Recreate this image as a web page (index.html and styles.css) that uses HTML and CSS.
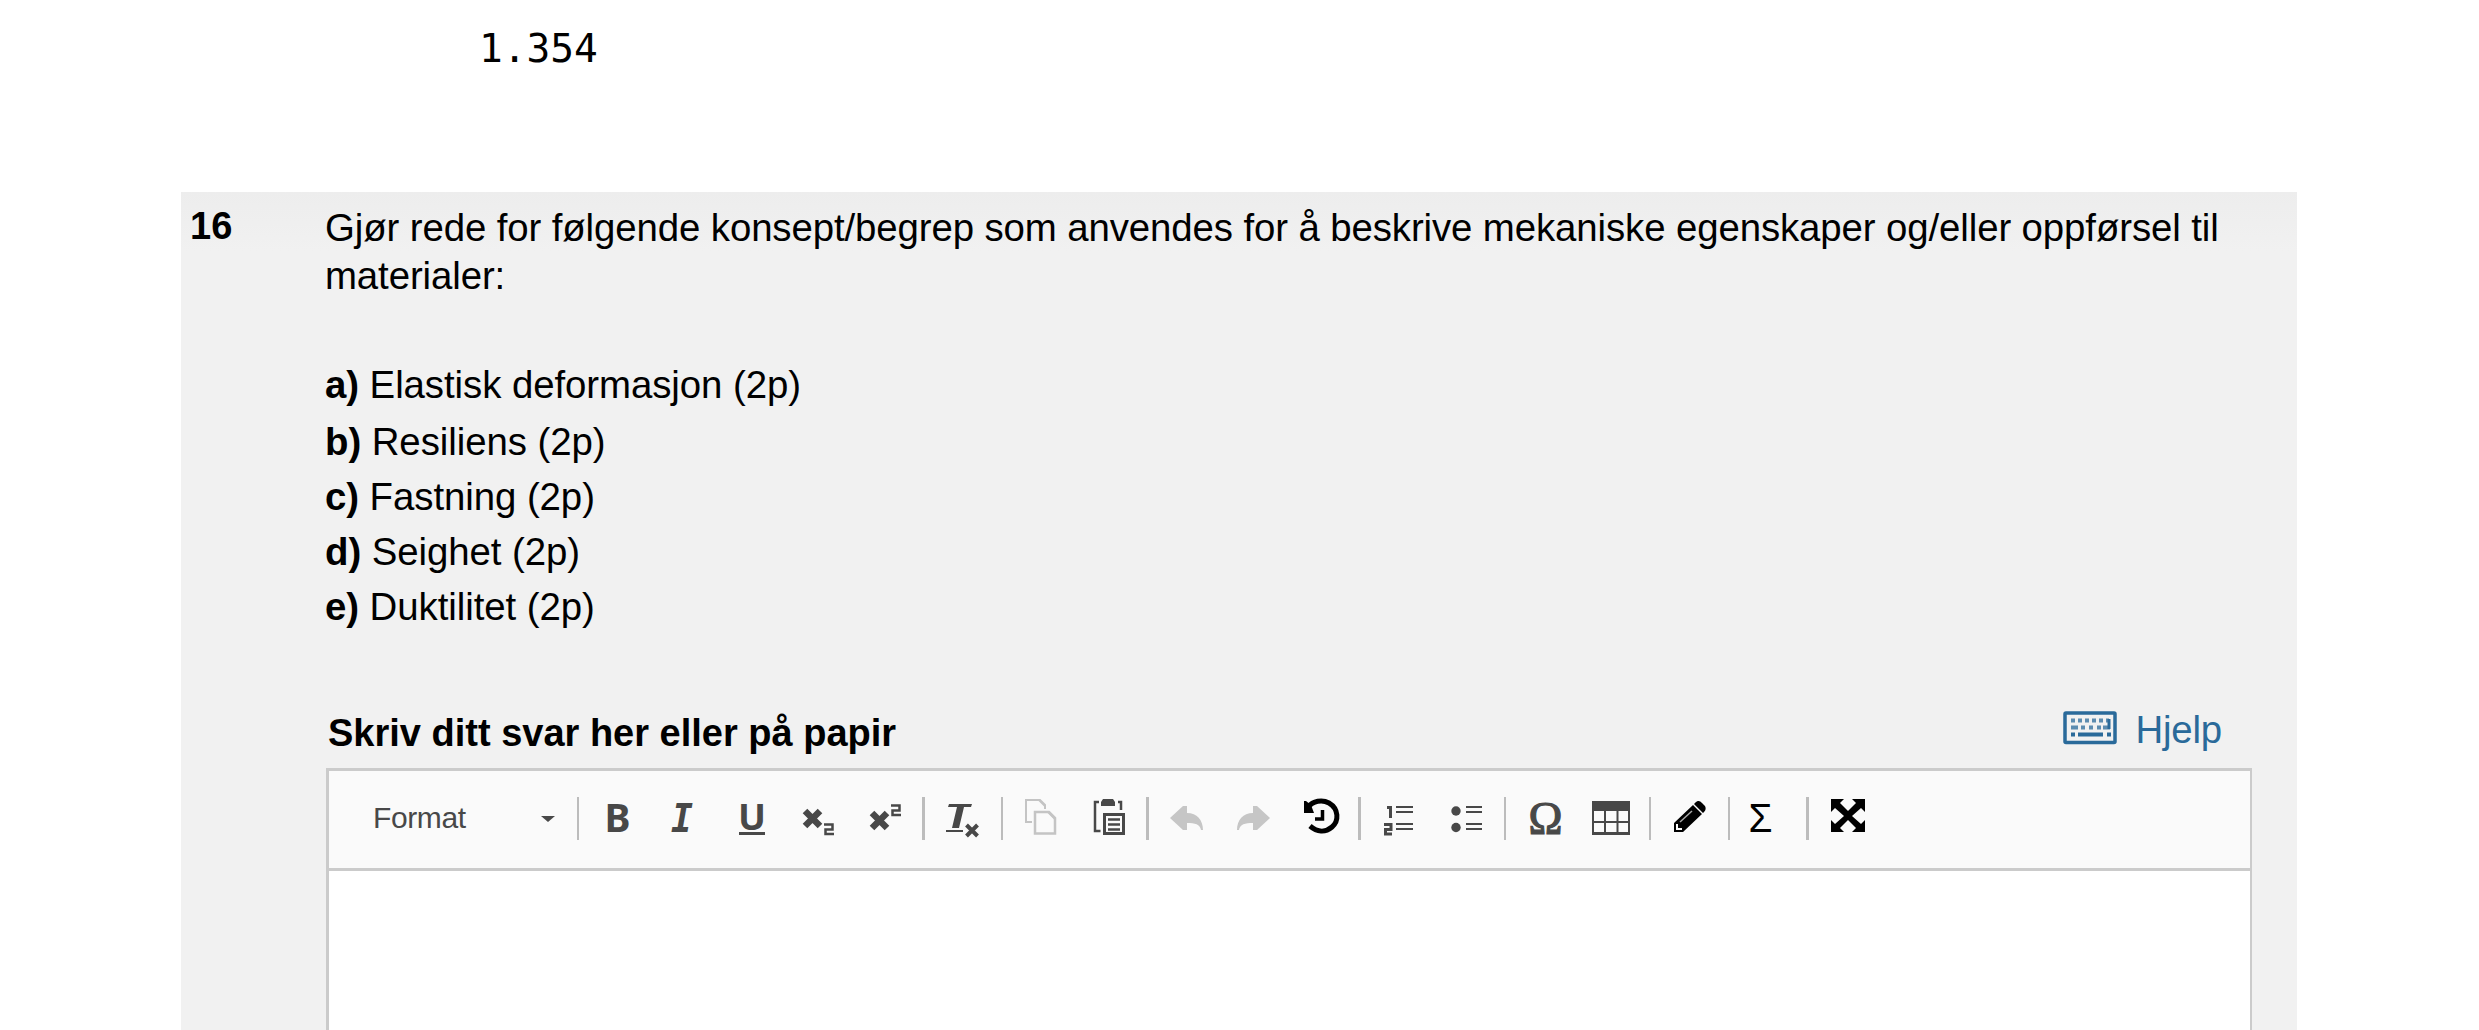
FILE: index.html
```
<!DOCTYPE html>
<html lang="no">
<head>
<meta charset="utf-8">
<title>Oppgave 16</title>
<link rel="stylesheet" href="styles.css">
</head>
<body>
<div class="previous-answer">1.354</div>
<main class="question">
  <div class="number">16</div>
  <div class="content">
    <p class="intro">Gjør rede for følgende konsept/begrep som anvendes for å beskrive mekaniske egenskaper og/eller oppførsel til<br>materialer:</p>
    <ul class="parts">
      <li><b>a)</b> Elastisk deformasjon (2p)</li>
      <li><b>b)</b> Resiliens (2p)</li>
      <li><b>c)</b> Fastning (2p)</li>
      <li><b>d)</b> Seighet (2p)</li>
      <li><b>e)</b> Duktilitet (2p)</li>
    </ul>
    <div class="answer-head">
      <strong class="answer-title">Skriv ditt svar her eller på papir</strong>
      <a class="help">
        <svg width="55" height="34" viewBox="2062 711 55 34" fill="none" stroke="#2a6a9a">
          <rect x="2065" y="713" width="50" height="29.500" rx="1" stroke-width="3.500"/>
          <path d="M2071 720.500h38" stroke-width="4" stroke-dasharray="4 3" opacity=".75"/>
          <path d="M2071 727.500h7m3 0h4m4 0h4m4 0h4m2 0h7" stroke-width="4" opacity=".75"/>
          <path d="M2071 734.500h4m3 0h25m4 0h4" stroke-width="4"/>
          <path d="M2109 719v10" stroke-width="3"/>
        </svg>
        <span>Hjelp</span>
      </a>
    </div>
    <div class="editor">
      <div class="toolbar">
        <div class="format"><span>Format</span><i class="caret"></i></div>
        <i class="sep"></i>
        <svg width="73" height="43" viewBox="579 797 73 43"><text x="604.500" y="832" class="sans" font-size="39" textLength="26" lengthAdjust="spacingAndGlyphs">B</text></svg>
        <svg width="68" height="43" viewBox="652 797 68 43"><text x="671" y="832" class="mono-i" font-size="38.500" textLength="22" lengthAdjust="spacingAndGlyphs">I</text></svg>
        <svg width="63" height="43" viewBox="720 797 63 43"><text x="738" y="829.500" class="sans" font-size="36" textLength="28" lengthAdjust="spacingAndGlyphs">U</text><path d="M739 832h26v3h-26z"/></svg>
        <svg width="67" height="43" viewBox="783 797 67 43"><path d="M805 811l15 15m0-15l-15 15" class="cross"/><path d="M824 824.500h8.500v5h-7v4.500h8.500" class="line"/></svg>
        <svg width="72" height="43" viewBox="850 797 72 43"><path d="M872 813l15 15m0-15l-15 15" class="cross"/><path d="M891 805.500h8.500v5h-7v4.500h8.500" class="line"/></svg>
        <i class="sep wide"></i>
        <svg width="76" height="43" viewBox="925 797 76 43"><path d="M949 804h23l-1 3h-7l-5 21h-7l5-21h-9zM946 830h17v2h-17z"/><path d="M966.500 825l11 11m0-11l-11 11" class="cross small"/></svg>
        <i class="sep"></i>
        <svg width="72" height="43" viewBox="1003 797 72 43"><g fill="none" stroke="#c4c4c4" stroke-width="2"><path d="M1032 822h-6v-22h14l5 5v4"/><path d="M1039 800l6 6"/><path d="M1035 812h14l6 6v15.500h-20z" stroke-width="2.500"/><path d="M1048 812l7 7"/></g></svg>
        <svg width="71" height="43" viewBox="1075 797 71 43"><path d="M1103 799h10l2 3v4h-14v-4z"/><path d="M1099 802h-4v29h5.500M1118 802h3v8" class="line" stroke-width="2"/><path d="M1104.500 814.500h19v19h-19z" class="line thick"/><path d="M1108 819.500h12m-12 5h12m-12 5h12" class="line"/></svg>
        <i class="sep wide"></i>
        <svg width="71" height="43" viewBox="1149 797 71 43"><path fill="#c6c6c6" d="M1170 818l13-12h4v7c10 0 16 7 16 17h-2c-1-6-6-7-14-7v7h-4z"/></svg>
        <svg width="66" height="43" viewBox="1220 797 66 43"><path fill="#c6c6c6" d="M1270 818l-13-12h-4v7c-10 0-16 7-16 17h2c1-6 6-7 14-7v7h4z"/></svg>
        <svg width="72" height="43" viewBox="1286 797 72 43"><path fill="#000" d="M1304 801h2l5 4 3 8h-10z"/><path d="M1308 807c5-6 14-8 21-4 10 6 10 18 3 24-7 6-15 5-22-1" fill="none" stroke="#000" stroke-width="5"/><path d="M1322.500 810v9h-7.500" fill="none" stroke="#000" stroke-width="3.500"/></svg>
        <i class="sep wide"></i>
        <svg width="67" height="43" viewBox="1361 797 67 43"><path d="M1396 806h17v2h-17zm0 5h17v2h-17zm0 12h17v2h-17zm0 5h17v2h-17z"/><path d="M1387 807.500h3.500V818M1384 824.500h7v5h-5.500v4.500h6.500" class="line thick"/></svg>
        <svg width="76" height="43" viewBox="1428 797 76 43"><circle cx="1456" cy="811" r="4.700"/><circle cx="1456" cy="827.500" r="4.700"/><path d="M1466 806h16v2h-16zm0 5h16v2h-16zm0 12h16v2h-16zm0 5h16v2h-16z"/></svg>
        <i class="sep"></i>
        <svg width="71" height="43" viewBox="1506 797 71 43"><text x="1528.500" y="834" class="omega" font-size="46" textLength="34" lengthAdjust="spacingAndGlyphs">Ω</text></svg>
        <svg width="72" height="43" viewBox="1577 797 72 43"><path fill-rule="evenodd" d="M1592 801h38v34h-38zM1594 811v10h10v-10zm12 0v10h10.500v-10zm12.500 0v10h9.500v-10zM1594 823v9h10v-9zm12 0v9h10.500v-9zm12.500 0v9h9.500v-9z"/></svg>
        <i class="sep"></i>
        <svg width="77" height="43" viewBox="1651 797 77 43"><g fill="#000"><path d="M1674 832v-9l19-18 9 9-19 18zM1695 803c3-3 5-2 7 0l3 3c1 2 1 4-1 6l-1 1-9-9z"/></g><path d="M1680 822l12-11" stroke="#a8a8a8" stroke-width="1.500"/><path d="M1677 824v5h5" fill="none" stroke="#fafafa" stroke-width="2"/></svg>
        <i class="sep"></i>
        <svg width="76" height="43" viewBox="1730 797 76 43"><text x="1748.500" y="832" class="sigma" font-size="41" textLength="24" lengthAdjust="spacingAndGlyphs">Σ</text></svg>
        <i class="sep wide"></i>
        <svg width="80" height="43" viewBox="1809 797 80 43"><g fill="#000"><path d="M1831 799h13l-4 4 8 8 8-8-4-4h13v13l-4-4-9 8 9 8 4-4v12h-13l4-4-8-8-8 8 4 4h-13v-12l4 4 9-8-9-8-4 4z"/></g></svg>
      </div>
    </div>
  </div>
</main>
</body>
</html>
```
FILE: styles.css
```
* { box-sizing: border-box; }
body {
  margin: 0;
  height: 1030px;
  overflow: hidden;
  background: #fff;
  color: #000;
  font: 38.4px/48px "Liberation Sans", Arial, sans-serif;
}
.previous-answer {
  height: 192px;
  padding: 24px 0 0 479px;
  font: 39.500px/48px "DejaVu Sans Mono", monospace;
}
.question {
  display: flex;
  width: 2116px;
  height: 838px;
  margin-left: 181px;
  padding-left: 10px;
  background: linear-gradient(#ededed, #f1f1f1 60px);
}
.number { width: 134px; padding-top: 10px; font-weight: bold; font-size: 38px; text-indent: -1px; }
.content { width: 1927px; padding-top: 12px; }
.intro { margin: 0; white-space: nowrap; letter-spacing: -0.11px; }
.parts { list-style: none; margin: 57px 0 0; padding: 0; line-height: 55px; letter-spacing: -0.07px; }
.parts li:first-child { margin-bottom: 2px; }
.answer-head {
  display: flex;
  justify-content: space-between;
  height: 62px;
  margin: 72px 30px 0 3px;
}
.answer-title { font-size: 38px; line-height: 54px; }
.help { display: flex; gap: 19px; color: #2a6a9a; line-height: 48px; letter-spacing: -0.2px; }
.help svg { margin-top: 5px; }
.editor {
  width: 1926px;
  height: 262px;
  margin-left: 1px;
  border: solid #cbcbcb;
  border-width: 3px 2px 0 3px;
  background: #fff;
}
.toolbar {
  display: flex;
  height: 100px;
  padding-top: 26px;
  background: #fafafa;
  border-bottom: 3px solid #cbcbcb;
}
.toolbar svg { flex: none; fill: #484848; overflow: visible; }
.format {
  display: flex;
  align-items: center;
  justify-content: space-between;
  width: 248px;
  height: 43px;
  padding: 0 22px 2px 44px;
  color: #484848;
  font-size: 30px;
  letter-spacing: -0.4px;
}
.caret { border: solid transparent; border-width: 6px 7px 0; border-top-color: #484848; margin-top: 3px; }
.sep { flex: none; width: 2px; height: 43px; background: #bcbcbc; }
.wide { width: 3px; }
.sans { font-family: "Noto Sans", sans-serif; font-weight: bold; }
.mono-i { font-family: "DejaVu Sans Mono", monospace; font-weight: bold; font-style: oblique; }
.omega { font-family: "Liberation Serif", serif; stroke: #484848; stroke-width: 1.2; }
.sigma { font-family: "Liberation Sans", sans-serif; fill: #000; }
.cross { fill: none; stroke: #484848; stroke-width: 6.5; }
.small { stroke-width: 4; }
.line { fill: none; stroke: #484848; stroke-width: 2.5; }
.thick { stroke-width: 3; }
```
